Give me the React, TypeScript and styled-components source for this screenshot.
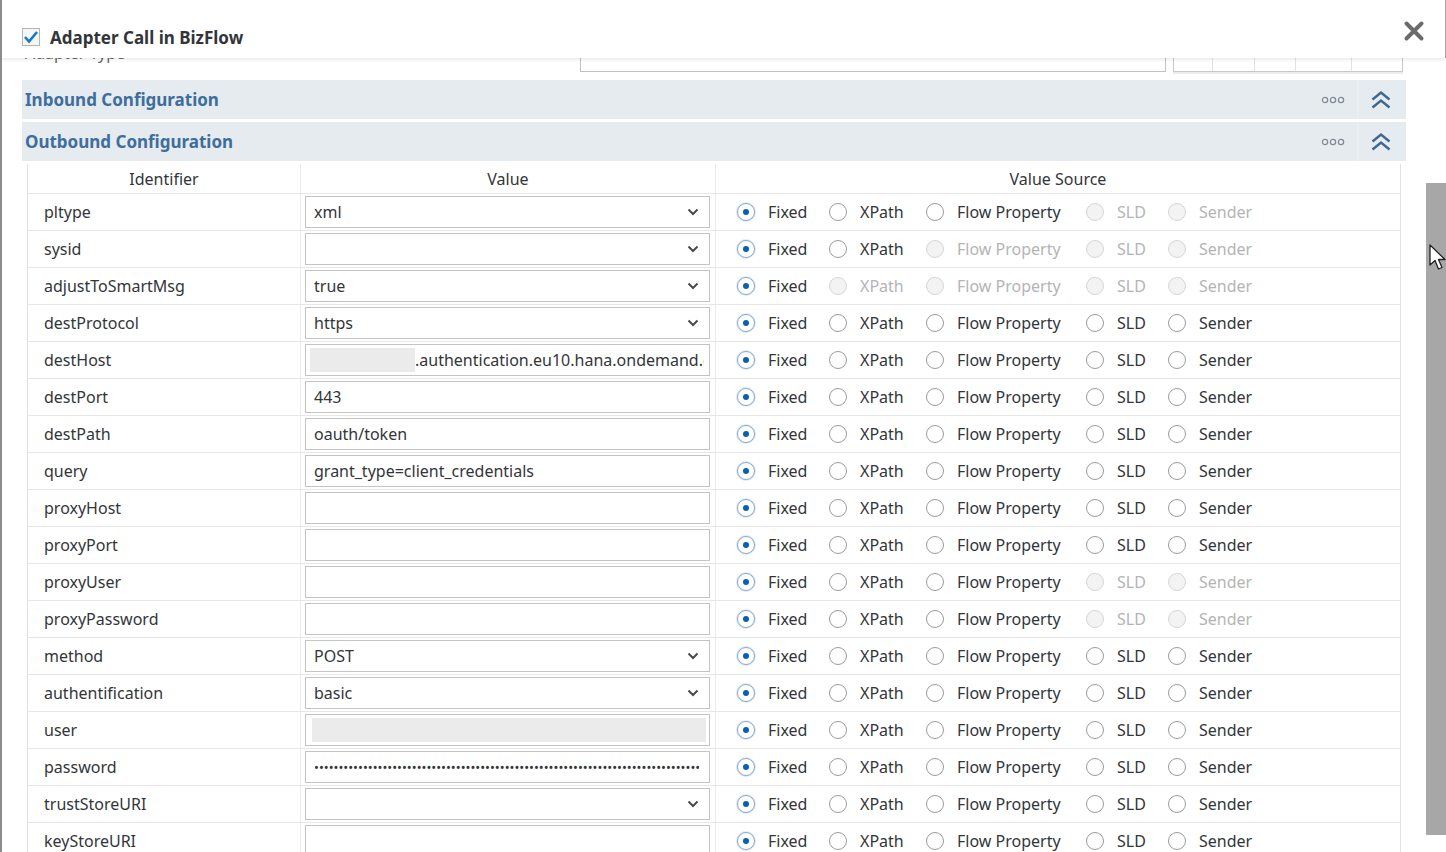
import React from 'react';
import styled, { createGlobalStyle } from 'styled-components';

const GlobalStyle = createGlobalStyle`
  html, body {
    margin: 0;
    padding: 0;
    overflow: hidden;
    background: #ffffff;
  }
  body {
    font-family: "Noto Sans", "Open Sans", "Liberation Sans", sans-serif;
    color: #32363a;
  }
  * {
    box-sizing: border-box;
  }
`;

const Dialog = styled.div`
  position: relative;
  width: 1446px;
  height: 852px;
  display: flex;
  flex-direction: column;
  background: #ffffff;
  border-left: 2px solid #8c8c8c;
  overflow: hidden;
`;

const Header = styled.header`
  position: relative;
  z-index: 2;
  flex: none;
  height: 58px;
  display: flex;
  align-items: center;
  justify-content: space-between;
  padding: 0 20px;
  background: #ffffff;
  border-right: 1px solid #a3a3a3;
  box-shadow: 0 2px 3px rgba(0, 0, 0, 0.08);
`;

const TitleGroup = styled.label`
  display: flex;
  align-items: center;
  gap: 10px;
  padding-top: 16px;
`;

const CheckBox = styled.span`
  width: 18px;
  height: 18px;
  display: flex;
  align-items: center;
  justify-content: center;
  border: 1px solid #b5b5b5;
  background: #f4f6f8;
`;

const Title = styled.span`
  font-size: 17px;
  font-weight: 700;
  color: #32363a;
`;

const CloseButton = styled.button`
  width: 22px;
  height: 22px;
  padding: 0;
  margin-top: 4px;
  border: 0;
  background: none;
  display: flex;
  align-items: center;
  justify-content: center;
`;

const Body = styled.div`
  flex: 1;
  min-height: 0;
  display: flex;
`;

const Content = styled.div`
  flex: 1;
  min-width: 0;
  padding: 0 20px 0 20px;
  overflow: hidden;
`;

const Scrollbar = styled.div`
  flex: none;
  width: 20px;
  background: #ffffff;
`;

const ScrollThumb = styled.div`
  margin-top: 125px;
  height: 652px;
  background: #a7a7a7;
`;

const TruncRow = styled.div`
  height: 16px;
  margin-bottom: 6px;
  display: flex;
  align-items: flex-end;
  overflow: hidden;
`;

const TruncLabel = styled.span`
  width: 558px;
  flex: none;
  padding-left: 3px;
  margin-bottom: 11px;
  font-size: 16px;
  line-height: 20px;
  color: #666;
`;

const TruncInput = styled.div`
  width: 586px;
  height: 30px;
  flex: none;
  margin-bottom: 2px;
  border: 1px solid #c2c2c2;
  border-top: 0;
`;

const TruncButtons = styled.div`
  width: 230px;
  height: 30px;
  flex: none;
  margin-left: 7px;
  margin-bottom: 2px;
  display: grid;
  grid-template-columns: 39px 42px 41px 56px 1fr;
  border: 1px solid #c8c8c8;
  border-top: 0;
  box-shadow: 0 2px 0 #ececec;
`;

const TruncButton = styled.span`
  border-right: 1px solid #e3e3e3;
  &:last-child {
    border-right: 0;
  }
`;

const SectionBar = styled.div`
  height: 39px;
  margin-bottom: 3px;
  display: flex;
  align-items: center;
  padding: 0 14px 0 3px;
  background: #e6ebef;
`;

const SectionTitle = styled.span`
  flex: 1;
  font-size: 17px;
  font-weight: 700;
  color: #3d6e9d;
`;

const BarActions = styled.div`
  display: flex;
  align-items: center;
  height: 100%;
`;

const BarDivider = styled.span`
  width: 2px;
  height: 100%;
  margin: 0 11px 0 12px;
  background: #ebeff2;
`;

const Table = styled.div`
  margin: 0 5px;
  border-left: 1px solid #e2e2e2;
  border-right: 1px solid #e2e2e2;
  background: #ffffff;
`;

const TableRow = styled.div<{ $head?: boolean }>`
  display: grid;
  grid-template-columns: 273px 415px 1fr;
  height: ${({ $head }) => ($head ? '30px' : '37px')};
  border-bottom: 1px solid #e7e7e7;
`;

const HeadCell = styled.div`
  display: flex;
  align-items: center;
  justify-content: center;
  font-size: 16px;
  color: #32363a;
  border-right: 1px solid #ececec;
  &:last-child {
    border-right: 0;
  }
`;

const IdCell = styled.div`
  display: flex;
  align-items: center;
  padding-left: 16px;
  font-size: 16px;
  color: #32363a;
  border-right: 1px solid #ececec;
`;

const ValueCell = styled.div`
  display: flex;
  align-items: center;
  padding: 0 5px 0 4px;
  border-right: 1px solid #ececec;
`;

const Field = styled.div<{ $tight?: boolean }>`
  width: 100%;
  height: 32px;
  display: flex;
  align-items: center;
  padding: ${({ $tight }) => ($tight ? '0 5px 0 4px' : '0 10px 0 8px')};
  border: 1px solid #c4c4c4;
  background: #ffffff;
  font-size: 16px;
  color: #32363a;
  overflow: hidden;
  white-space: nowrap;
`;

const FieldText = styled.span`
  flex: 1;
  min-width: 0;
  overflow: hidden;
  white-space: nowrap;
`;

const Redact = styled.span<{ $w?: number }>`
  flex: ${({ $w }) => ($w ? 'none' : '1')};
  width: ${({ $w }) => ($w ? `${$w}px` : 'auto')};
  height: 24px;
  background: #ebebeb;
`;

const Dots = styled.span`
  flex: 1;
  min-width: 0;
  overflow: hidden;
  white-space: nowrap;
  font-size: 13px;
  letter-spacing: 0;
  color: #32363a;
`;

const SourceCell = styled.div`
  display: grid;
  grid-template-columns: 92px 97px 160px 82px 1fr;
  align-items: center;
  padding-left: 21px;
`;

const Option = styled.label<{ $disabled?: boolean }>`
  display: flex;
  align-items: center;
  gap: 13px;
  font-size: 16px;
  color: ${({ $disabled }) => ($disabled ? '#b4b4b4' : '#32363a')};
  white-space: nowrap;
`;

const Radio = styled.span<{ $checked?: boolean; $disabled?: boolean }>`
  width: 18px;
  height: 18px;
  flex: none;
  border-radius: 50%;
  display: flex;
  align-items: center;
  justify-content: center;
  border: 1px solid ${({ $checked, $disabled }) =>
    $checked ? '#8aa8cb' : $disabled ? '#d6d6d6' : '#9b9b9b'};
  background: ${({ $disabled }) => ($disabled ? '#f3f3f3' : '#ffffff')};
  box-shadow: ${({ $checked }) => ($checked ? '0 0 0 1px #dfe9f5' : 'none')};

  &::after {
    content: '';
    display: ${({ $checked }) => ($checked ? 'block' : 'none')};
    width: 6px;
    height: 6px;
    border-radius: 50%;
    background: #0a5fb4;
  }
`;

const Cursor = styled.svg`
  position: absolute;
  left: 1427px;
  top: 244px;
  z-index: 3;
`;

type Kind = 'select' | 'text' | 'host' | 'redacted' | 'password';

interface Row {
  id: string;
  kind: Kind;
  value?: string;
  disabled?: string[];
}

const sources = ['Fixed', 'XPath', 'Flow Property', 'SLD', 'Sender'];

const rows: Row[] = [
  { id: 'pltype', kind: 'select', value: 'xml', disabled: ['SLD', 'Sender'] },
  { id: 'sysid', kind: 'select', value: '', disabled: ['Flow Property', 'SLD', 'Sender'] },
  { id: 'adjustToSmartMsg', kind: 'select', value: 'true', disabled: ['XPath', 'Flow Property', 'SLD', 'Sender'] },
  { id: 'destProtocol', kind: 'select', value: 'https' },
  { id: 'destHost', kind: 'host', value: '.authentication.eu10.hana.ondemand.com' },
  { id: 'destPort', kind: 'text', value: '443' },
  { id: 'destPath', kind: 'text', value: 'oauth/token' },
  { id: 'query', kind: 'text', value: 'grant_type=client_credentials' },
  { id: 'proxyHost', kind: 'text', value: '' },
  { id: 'proxyPort', kind: 'text', value: '' },
  { id: 'proxyUser', kind: 'text', value: '', disabled: ['SLD', 'Sender'] },
  { id: 'proxyPassword', kind: 'text', value: '', disabled: ['SLD', 'Sender'] },
  { id: 'method', kind: 'select', value: 'POST' },
  { id: 'authentification', kind: 'select', value: 'basic' },
  { id: 'user', kind: 'redacted' },
  { id: 'password', kind: 'password' },
  { id: 'trustStoreURI', kind: 'select', value: '' },
  { id: 'keyStoreURI', kind: 'text', value: '' },
];

const Chevron = () => (
  <svg width="12" height="8" viewBox="0 0 12 8">
    <polyline points="1.5,1.5 6,6 10.5,1.5" fill="none" stroke="#4a4a4a" strokeWidth="2" />
  </svg>
);

const MoreIcon = () => (
  <svg width="24" height="8" viewBox="0 0 24 8">
    {[4, 12, 20].map((cx) => (
      <circle key={cx} cx={cx} cy="4" r="2.6" fill="#eef1f4" stroke="#7f8b96" strokeWidth="1.3" />
    ))}
  </svg>
);

const CollapseIcon = () => (
  <svg width="22" height="20" viewBox="0 0 22 20">
    <polyline points="2.5,9.5 11,2.5 19.5,9.5" fill="none" stroke="#3c6892" strokeWidth="2.4" />
    <polyline points="2.5,17.5 11,10.5 19.5,17.5" fill="none" stroke="#3c6892" strokeWidth="2.4" />
  </svg>
);

const ValueField = ({ row }: { row: Row }) => {
  if (row.kind === 'host') {
    return (
      <Field $tight>
        <Redact $w={105} />
        <FieldText>{row.value}</FieldText>
      </Field>
    );
  }
  if (row.kind === 'redacted') {
    return (
      <Field $tight>
        <Redact style={{ margin: '0 -2px 0 2px' }} />
      </Field>
    );
  }
  if (row.kind === 'password') {
    return (
      <Field>
        <Dots>{'•'.repeat(89)}</Dots>
      </Field>
    );
  }
  return (
    <Field>
      <FieldText>{row.value}</FieldText>
      {row.kind === 'select' && <Chevron />}
    </Field>
  );
};

const Section = ({ title }: { title: string }) => (
  <SectionBar>
    <SectionTitle>{title}</SectionTitle>
    <BarActions>
      <MoreIcon />
      <BarDivider />
      <CollapseIcon />
    </BarActions>
  </SectionBar>
);

export default function App() {
  return (
    <>
      <GlobalStyle />
      <Dialog>
        <Header>
          <TitleGroup>
            <CheckBox>
              <svg width="16" height="14" viewBox="0 0 16 14">
                <polyline points="2,7 6,11.5 14,2" fill="none" stroke="#1b78c8" strokeWidth="2.6" />
              </svg>
            </CheckBox>
            <Title>Adapter Call in BizFlow</Title>
          </TitleGroup>
          <CloseButton aria-label="Close">
            <svg width="22" height="22" viewBox="0 0 22 22">
              <path d="M3.5 3.5 L18.5 18.5 M18.5 3.5 L3.5 18.5" stroke="#6b6b6b" strokeWidth="4" strokeLinecap="round" />
            </svg>
          </CloseButton>
        </Header>
        <Body>
          <Content>
            <TruncRow>
              <TruncLabel>Adapter Type</TruncLabel>
              <TruncInput />
              <TruncButtons>
                <TruncButton />
                <TruncButton />
                <TruncButton />
                <TruncButton />
                <TruncButton />
              </TruncButtons>
            </TruncRow>
            <Section title="Inbound Configuration" />
            <Section title="Outbound Configuration" />
            <Table>
              <TableRow $head>
                <HeadCell>Identifier</HeadCell>
                <HeadCell>Value</HeadCell>
                <HeadCell>Value Source</HeadCell>
              </TableRow>
              {rows.map((row) => (
                <TableRow key={row.id}>
                  <IdCell>{row.id}</IdCell>
                  <ValueCell>
                    <ValueField row={row} />
                  </ValueCell>
                  <SourceCell>
                    {sources.map((s) => {
                      const off = row.disabled?.includes(s);
                      return (
                        <Option key={s} $disabled={off}>
                          <Radio $checked={s === 'Fixed'} $disabled={off} />
                          {s}
                        </Option>
                      );
                    })}
                  </SourceCell>
                </TableRow>
              ))}
            </Table>
          </Content>
          <Scrollbar>
            <ScrollThumb />
          </Scrollbar>
        </Body>
        <Cursor width="18" height="28" viewBox="0 0 18 28">
          <path d="M1 1 L1 21 L6 16.5 L9.5 25 L13 23.5 L9.5 15.5 L16 15.5 Z" fill="#ffffff" stroke="#222" strokeWidth="1.3" strokeLinejoin="round" />
        </Cursor>
      </Dialog>
    </>
  );
}
